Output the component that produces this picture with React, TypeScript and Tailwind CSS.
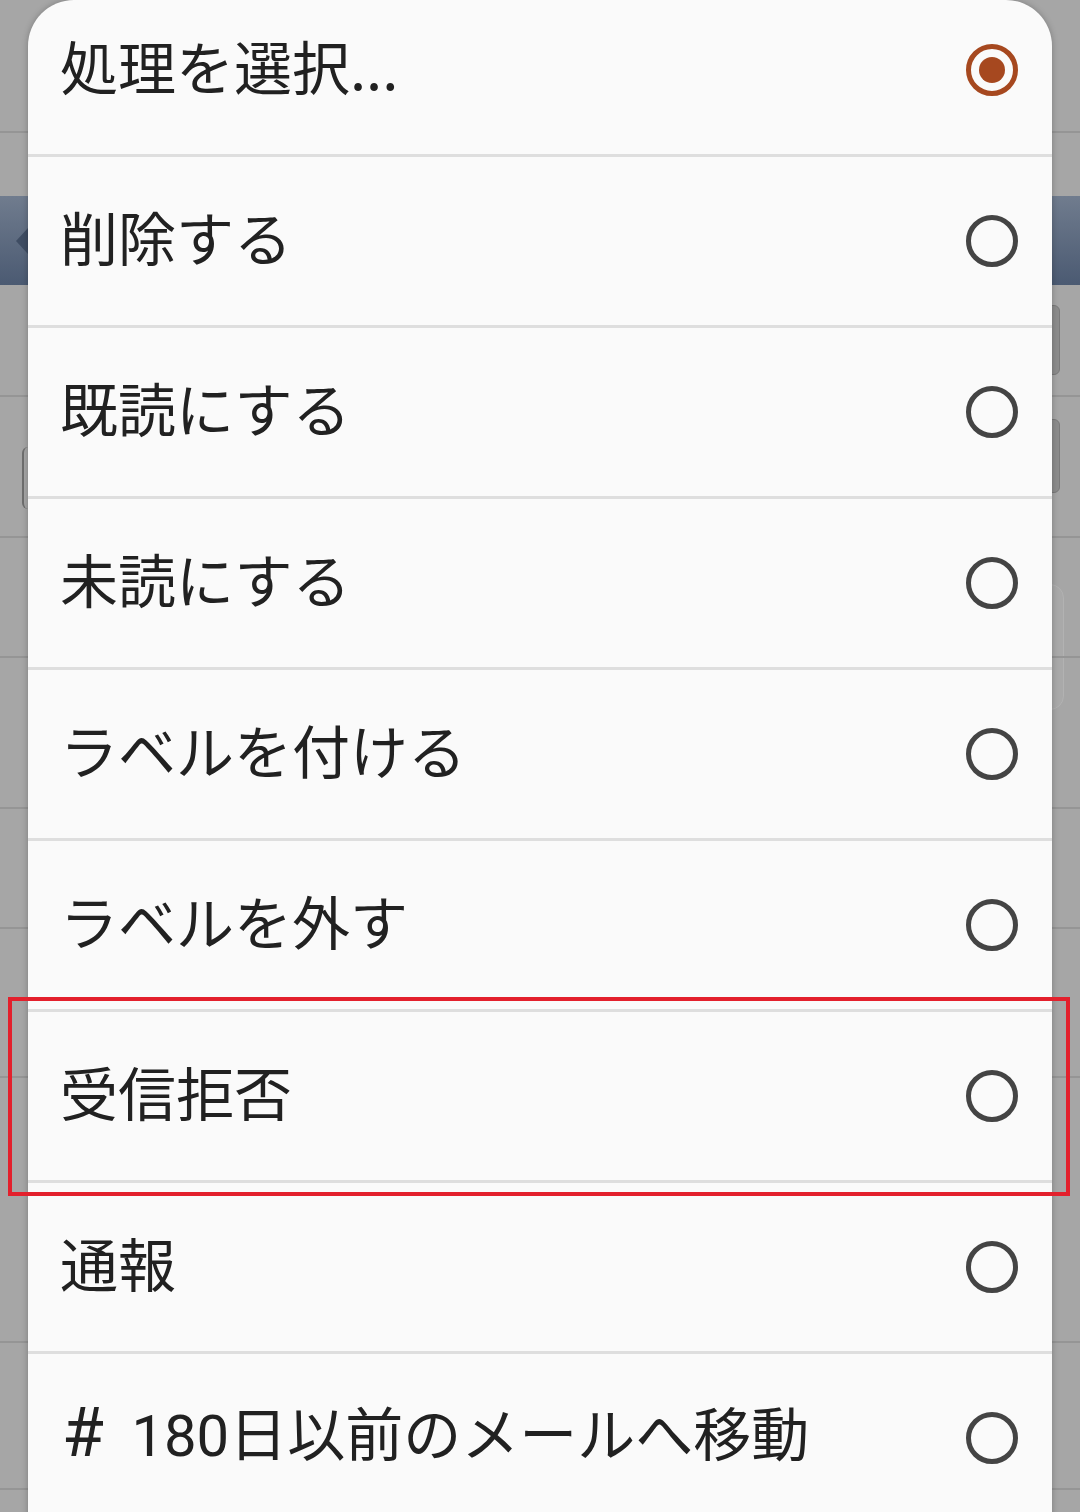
import React from 'react';

const items: React.ReactNode[] = [
  '削除する',
  '既読にする',
  '未読にする',
  'ラベルを付ける',
  'ラベルを外す',
  '受信拒否',
  '通報',
  <>
    <span className="inline-block w-[57px] font-['Roboto'] text-[68px] leading-none pl-[2px]">#</span>
    <span className="font-['Roboto']"> 180</span>日以前のメールへ移動
  </>,
];

function Radio({ checked }: { checked?: boolean }) {
  if (checked) {
    return (
      <div className="w-[52px] h-[52px] rounded-full border-[5px] border-[#a6481f] flex items-center justify-center flex-shrink-0">
        <div className="w-[26px] h-[26px] rounded-full bg-[#a6481f]" />
      </div>
    );
  }
  return <div className="w-[52px] h-[52px] rounded-full border-[5px] border-[#444444] flex-shrink-0" />;
}

function Backdrop() {
  // dimmed app screen behind the dialog
  return (
    <div className="flex flex-col w-full h-full bg-[#a6a6a6]">
      <div className="h-[133px] border-b-2 border-[#959595]" />
      <div className="h-[63px]" />
      <div className="h-[89px] bg-gradient-to-b from-[#707c8e] to-[#4b5a72] flex items-center justify-between px-[14px]">
        <svg width="16" height="30" viewBox="0 0 16 30">
          <path d="M14 2 L2 15 L14 28" fill="#3f4d63" />
        </svg>
        <span />
      </div>
      <div className="h-[110px] flex items-center justify-end pr-[20px]">
        <div className="w-[36px] h-[70px] rounded-[6px] bg-[#8c8c8c] border border-[#7a7a7a]" />
      </div>
      <div className="h-[141px] border-t-2 border-[#959595] flex items-start justify-between pt-[22px]">
        <div className="ml-[22px] mt-[28px] w-[30px] h-[62px] rounded-l-[6px] border-l-2 border-[#6e6e6e]" />
        <div className="mr-[20px] w-[36px] h-[74px] rounded-[6px] bg-[#8c8c8c] border border-[#7a7a7a]" />
      </div>
      <div className="h-[120px] border-t-2 border-[#959595] flex justify-end pt-[46px]">
        <div className="mr-[16px] w-[40px] h-[126px] rounded-[14px] bg-[#a9a9a9] border border-[#b2b2b2]" />
      </div>
      <div className="h-[151px] border-t-2 border-[#959595]" />
      <div className="h-[120px] border-t-2 border-[#959595]" />
      <div className="h-[149px] border-t-2 border-[#959595]" />
      <div className="h-[265px] border-t-2 border-[#959595]" />
      <div className="h-[147px] border-t-2 border-[#959595]" />
      <div className="flex-1 border-t-2 border-[#959595]" />
    </div>
  );
}

export default function App() {
  return (
    <div className="relative w-[1080px] h-[1512px] overflow-hidden font-['Noto_Sans_CJK_JP',sans-serif] text-[#212121]">
      <Backdrop />

      {/* Dialog list */}
      <div className="absolute left-[28px] top-0 w-[1024px] h-[1560px] bg-[#fafafa] rounded-t-[46px] shadow-[0_0_6px_rgba(0,0,0,0.25)] flex flex-col">
        <div className="h-[154px] flex-shrink-0 flex items-center justify-between pl-[32px] pr-[34px] pb-[14px]">
          <span className="text-[58px] leading-none pb-[10px]">処理を選択...</span>
          <Radio checked />
        </div>
        {items.map((label, i) => (
          <div
            key={i}
            className="h-[171px] flex-shrink-0 border-t-[3px] border-[#dedede] flex items-center justify-between pl-[32px] pr-[34px]"
          >
            <span className="text-[58px] leading-none pb-[10px]">{label}</span>
            <Radio />
          </div>
        ))}
      </div>

      {/* Highlight box */}
      <div className="absolute left-[8px] top-[997px] w-[1062px] h-[199px] border-[4px] border-[#e3202c]" />
    </div>
  );
}
